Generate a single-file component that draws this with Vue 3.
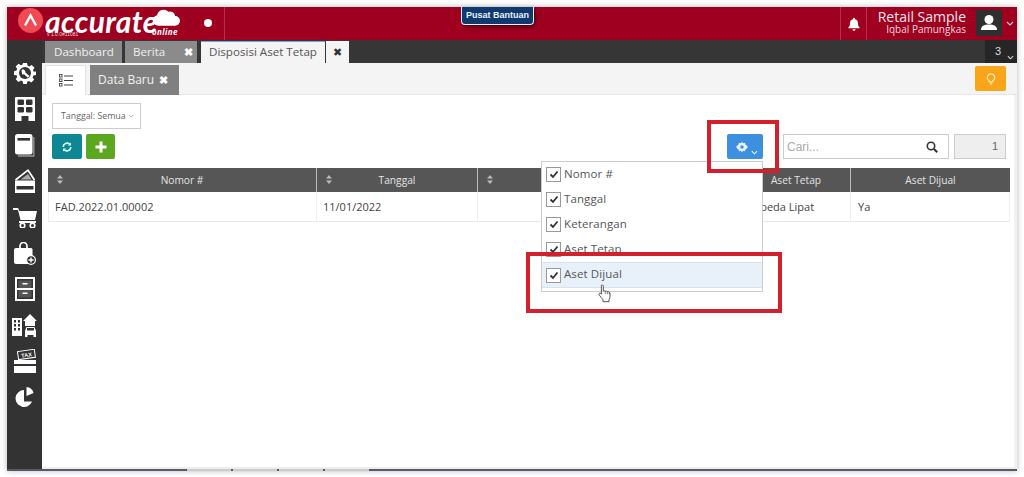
<script setup>
const columns = [
  { label: 'Nomor #', value: 'FAD.2022.01.00002', sort: true },
  { label: 'Tanggal', value: '11/01/2022', sort: true },
  { label: 'Keterangan', value: '', sort: true },
  { label: 'Aset Tetap', value: 'Sepeda Lipat', sort: false },
  { label: 'Aset Dijual', value: 'Ya', sort: false }
]
const options = ['Nomor #', 'Tanggal', 'Keterangan', 'Aset Tetap', 'Aset Dijual']
</script>

<template>
  <div class="window">
    <header class="topbar">
      <div class="brand">
        <svg class="mark" viewBox="0 0 25 25"><circle cx="12.500" cy="12.500" r="12.500" fill="#ee4b55"/><path d="M7 17.500 12.500 7.500l5.500 10" fill="none" stroke="#fff" stroke-width="2.400"/></svg>
        <span class="word">accurate</span>
        <svg class="cloud" viewBox="0 0 28 19"><path d="M5.500 19a5.500 5.500 0 0 1-1.300-10.800A7 7 0 0 1 16 4.500a5.500 5.500 0 0 1 7 4.500 5 5 0 0 1 0 10Z" fill="#fff"/></svg>
        <span class="online">online</span>
        <span class="version">v 1.0.0#11081</span>
      </div>
      <div class="dot-cell"><span class="dot"></span></div>
      <div class="spacer"></div>
      <div class="bell-cell">
        <svg viewBox="0 0 14 14" class="bell"><path d="M7 .8a1 1 0 0 1 1 1v.5c2.200.5 3 2.300 3 4.200 0 2 .6 3 1.600 4v.7H1.400v-.7c1-1 1.600-2 1.600-4 0-1.900.8-3.700 3-4.200v-.5a1 1 0 0 1 1-1ZM5.500 12.300h3a1.500 1.500 0 0 1-3 0Z" fill="#fff"/></svg>
      </div>
      <div class="user">
        <div class="org">Retail Sample</div>
        <div class="person">Iqbal Pamungkas</div>
      </div>
      <div class="avatar">
        <svg viewBox="0 0 20 20"><circle cx="10" cy="6.500" r="4.500" fill="#fff"/><path d="M2 17c0-4 3-5.500 8-5.500s8 1.500 8 5.500Z" fill="#fff"/></svg>
      </div>
      <svg class="user-caret" viewBox="0 0 8 5"><path d="m1 1 3 3 3-3" fill="none" stroke="#e8c8cf" stroke-width="1.200"/></svg>
    </header>

    <div class="body">
      <nav class="sidebar">
        <div class="slot">
          <svg width="22" height="22" viewBox="0 0 22 22"><path d="M9 1h4l.6 2.700 1.700.7 2.400-1.500 2.800 2.800-1.500 2.400.7 1.700L22 9.500v3.500l-2.700.6-.7 1.700 1.500 2.400-2.800 2.800-2.400-1.500-1.700.7L12.800 22H9.200l-.6-2.700-1.700-.7-2.400 1.500-2.800-2.800 1.500-2.400-.7-1.700L0 12.900V9.200l2.500-.6.700-1.700-1.500-2.400 2.800-2.800 2.400 1.500 1.700-.7Z" fill="#fff"/><circle cx="11" cy="11" r="6" fill="#333"/><path d="M7.500 8.500 8.800 7l2.400 1.800.2 1.700 4 3.500-1.500 1.700-3.900-3.400-1.800.1Z" fill="#fff"/></svg>
        </div>
        <div class="slot">
          <svg width="20" height="24" viewBox="0 0 20 24"><path d="M1 0h18a1 1 0 0 1 1 1v23h-6.500v-5h-7v5H0V1a1 1 0 0 1 1-1Z" fill="#fff"/><rect x="2.500" y="2.500" width="6.500" height="5.500" rx="1.200" fill="#333"/><rect x="11" y="2.500" width="6.500" height="5.500" rx="1.200" fill="#333"/><rect x="2.500" y="10" width="6.500" height="5.500" rx="1.200" fill="#333"/><rect x="11" y="10" width="6.500" height="5.500" rx="1.200" fill="#333"/></svg>
        </div>
        <div class="slot">
          <svg width="21" height="24" viewBox="0 0 21 24"><path d="M19.800 4v19H4" fill="none" stroke="#999" stroke-width="1.300"/><rect x="1" y="1" width="17.500" height="20.500" rx="2.500" fill="#fff"/><rect x="3.500" y="5" width="12.500" height="2.600" fill="#333"/></svg>
        </div>
        <div class="slot">
          <svg width="22" height="25" viewBox="0 0 22 25"><path d="M1.500 11 14 1.200 20.500 11" fill="none" stroke="#fff" stroke-width="1.700" stroke-linejoin="round"/><path d="M6.500 10.500 14 5l3.500 5.500Z" fill="#aaa"/><path d="M1 11.500h20v12.500H1Z" fill="#fff"/><rect x="2.500" y="17" width="17" height="3.500" fill="#333"/></svg>
        </div>
        <div class="slot">
          <svg width="24" height="21" viewBox="0 0 24 21"><path d="M0 1h5l1.500 3H24l-2 9H7.500L5 3H0Z" fill="#fff"/><rect x="6" y="14" width="17" height="2" fill="#fff"/><circle cx="9.500" cy="18.500" r="2.300" fill="#333" stroke="#fff" stroke-width="1.600"/><circle cx="19.500" cy="18.500" r="2.300" fill="#333" stroke="#fff" stroke-width="1.600"/></svg>
        </div>
        <div class="slot">
          <svg width="22" height="23" viewBox="0 0 22 23"><path d="M6 6V4a3.500 3.500 0 0 1 7 0v2" fill="none" stroke="#fff" stroke-width="1.700"/><path d="M2 6h15a1.500 1.500 0 0 1 1.500 1.500V17a4 4 0 0 0-3 5H2a2 2 0 0 1-2-2V8a2 2 0 0 1 2-2Z" fill="#fff"/><circle cx="17" cy="18" r="4.400" fill="#333" stroke="#fff" stroke-width="1.200"/><path d="M14.500 18h5M17 15.500v5" stroke="#fff" stroke-width="1.400"/></svg>
        </div>
        <div class="slot">
          <svg width="20" height="24" viewBox="0 0 20 24"><rect x="1" y="1" width="18" height="22" fill="none" stroke="#fff" stroke-width="2"/><rect x="3.500" y="3.500" width="13" height="7.500" fill="#555"/><rect x="3.500" y="13" width="13" height="7.500" fill="#555"/><rect x="7.500" y="6" width="5" height="1.500" fill="#fff"/><rect x="7.500" y="15.500" width="5" height="1.500" fill="#fff"/><rect x="2" y="11" width="16" height="2" fill="#fff"/></svg>
        </div>
        <div class="slot">
          <svg width="25" height="25" viewBox="0 0 25 25"><rect x="0" y="5" width="10" height="18" fill="#fff"/><g fill="#333"><rect x="2" y="7" width="2" height="2.500"/><rect x="6" y="7" width="2" height="2.500"/><rect x="2" y="11" width="2" height="2.500"/><rect x="6" y="11" width="2" height="2.500"/><rect x="2" y="15" width="2" height="2.500"/><rect x="6" y="15" width="2" height="2.500"/></g><path d="M11 8l7-7 7 7h-2v5H13V8Z" fill="#fff"/><path d="M13 18l1.500-4h8l1.500 4v6h-2.500v-2h-6v2H13Z" fill="#fff"/><rect x="15" y="15" width="7" height="2.500" fill="#333"/></svg>
        </div>
        <div class="slot">
          <svg width="24" height="24" viewBox="0 0 24 24"><rect x="1" y="11" width="22" height="4" fill="#fff"/><rect x="1" y="17" width="22" height="7" fill="#fff"/><g transform="rotate(-8 13 6)"><rect x="5" y="1.500" width="17" height="8" fill="#333" stroke="#fff" stroke-width="1"/><text x="13.500" y="8" class="tax">TAX</text></g></svg>
        </div>
        <div class="slot">
          <svg width="20" height="20" viewBox="0 0 20 20"><path d="M9 3a8.500 8.500 0 1 0 8 11.500H9Z" fill="#fff"/><path d="M11.500 0a8 8 0 0 1 7 6l-7 3Z" fill="#fff"/></svg>
        </div>
      </nav>

      <div class="main">
        <div class="tabbar">
          <div class="tab tab-home">Dashboard</div>
          <div class="tab tab-close">Berita <b>✖</b></div>
          <div class="tab tab-active">Disposisi Aset Tetap</div>
          <div class="tab tab-x">✖</div>
          <div class="spacer"></div>
          <div class="tab-count">3<svg viewBox="0 0 8 5"><path d="m1 1 3 3 3-3" fill="none" stroke="#ddd" stroke-width="1.200"/></svg></div>
        </div>

        <div class="subbar">
          <div class="subtab-list">
            <svg width="14" height="13" viewBox="0 0 14 13"><g fill="none" stroke="#555"><rect x=".5" y=".5" width="2.500" height="2.500"/><rect x=".5" y="5" width="2.500" height="2.500"/><rect x=".5" y="9.500" width="2.500" height="2.500"/></g><path d="M5 2h9M5 6.500h9M5 11h9" stroke="#444" stroke-width="1.100"/></svg>
          </div>
          <div class="subtab-new">Data Baru <b>✖</b></div>
          <div class="spacer"></div>
          <button class="bulb">
            <svg width="10" height="12" viewBox="0 0 12 14"><path d="M6 1a4.300 4.300 0 0 1 2.300 8l-.3 1.500H4L3.700 9A4.300 4.300 0 0 1 6 1Z" fill="none" stroke="#ffe9b0" stroke-width="1.500"/><path d="M4.500 12h3M5 13.300h2" stroke="#ffe9b0"/></svg>
          </button>
        </div>

        <div class="content">
          <div class="filter">Tanggal: Semua <svg viewBox="0 0 8 5"><path d="m1 1 3 3 3-3" fill="none" stroke="#999"/></svg></div>

          <div class="toolbar">
            <button class="btn teal">
              <svg width="10" height="10" viewBox="0 0 10 10"><path d="M1.200 5a3.800 3.800 0 0 1 6.300-2.800M8.800 5a3.800 3.800 0 0 1-6.300 2.800" fill="none" stroke="#dff" stroke-width="1.700"/><path d="M9 .5v3H6ZM1 9.500v-3h3Z" fill="#dff"/></svg>
            </button>
            <button class="btn green">
              <svg width="12" height="12" viewBox="0 0 12 12"><path d="M6 .5v11M.5 6h11" stroke="#fff" stroke-width="3"/></svg>
            </button>
            <div class="spacer"></div>
            <button class="btn blue">
              <svg width="12" height="12" viewBox="0 0 12 12"><path d="M6 .5 7 2.300l2-.5.600 2L11.500 5v2l-1.900 1.200-.6 2-2-.5-1 1.800-1-1.800-2 .5-.6-2L.5 7V5l1.900-1.200.6-2 2 .5Z" fill="#e8f2ff"/><circle cx="6" cy="6" r="1.700" fill="#3d8fdf"/></svg>
              <svg class="blue-caret" viewBox="0 0 8 5"><path d="m1 1 3 3 3-3" fill="none" stroke="#e8f2ff" stroke-width="1.200"/></svg>
            </button>
            <div class="search">
              <span>Cari...</span>
              <svg width="12" height="12" viewBox="0 0 12 12"><circle cx="5" cy="5" r="3.700" fill="none" stroke="#333" stroke-width="1.600"/><path d="m8 8 3.200 3.200" stroke="#333" stroke-width="2"/></svg>
            </div>
            <div class="page">1</div>
          </div>

          <div class="grid">
            <div v-for="col in columns" :key="col.label" class="th">
              <svg v-if="col.sort" class="sort" width="6" height="9" viewBox="0 0 6 9"><path d="M3 0 6 3.500H0ZM3 9 0 5.500h6Z" fill="#bbb"/></svg>
              {{ col.label }}
            </div>
            <div v-for="col in columns" :key="col.label + '-v'" class="td">{{ col.value }}</div>
          </div>
        </div>
      </div>
    </div>

    <div class="footer">
      <div class="foot-tabs"><i></i><i></i><i></i><i></i></div>
    </div>

    <div class="help">Pusat Bantuan</div>

    <div class="menu">
      <div v-for="opt in options" :key="opt" class="opt" :class="{ hover: opt === 'Aset Dijual' }">
        <span class="check">
          <svg width="10" height="9" viewBox="0 0 10 9"><path d="m1.500 4.500 2.500 2.500 4.500-5.500" fill="none" stroke="#333" stroke-width="1.800"/></svg>
        </span>
        <span class="opt-label">{{ opt }}</span>
      </div>
    </div>

    <div class="frame frame-gear"></div>
    <div class="frame frame-item"></div>

    <svg class="hand" width="15" height="19" viewBox="0 0 15 19"><path d="M4.500 1.200c.8-.6 1.800 0 1.800 1v5l.8-.3c.6-.2 1.200 0 1.400.3.700-.4 1.500-.2 1.700.4.700-.3 1.500 0 1.700.6.600 0 1.100.4 1.100 1.100v3.300c0 1.200-.4 2-1 2.800v2.300H6v-2c-1-1.200-2.500-3-4-5-.6-.9.500-2 1.500-1.300l.9.800V2.200c0-.4 0-.8.100-1Z" fill="#fff" stroke="#444" stroke-width=".9" stroke-linejoin="round"/><path d="M8.300 7.200v3M10.400 7.600v2.600M12.300 8.200v2" stroke="#444" stroke-width=".7"/></svg>
  </div>
</template>

<style>
html, body { margin: 0; background: #fff; overflow: hidden; }
</style>

<style scoped>
* { box-sizing: border-box; }
.window {
  position: relative;
  display: flex;
  flex-direction: column;
  width: 1010px;
  height: 464px;
  margin: 7px 7px 6px;
  background: #fff;
  box-shadow: 0 0 6px rgba(0, 0, 0, .28);
  font-family: "Open Sans", sans-serif;
  overflow: visible;
}
.spacer { flex: 1; }
.topbar {
  display: flex;
  align-items: stretch;
  height: 33px;
  background: #a00020;
  color: #fff;
  flex: none;
}
.brand { position: relative; width: 183px; flex: none; border-right: 1px solid #8b0a25; }
.mark { position: absolute; left: 11px; top: 1px; width: 25px; height: 25px; }
.word {
  position: absolute;
  left: 38px;
  top: 4px;
  font: italic 700 30px/20px Lato, sans-serif;
  letter-spacing: .4px;
}
.cloud { position: absolute; left: 146px; top: 0; width: 27px; height: 19px; }
.online { position: absolute; left: 145px; top: 20px; font: italic 700 8px/9px "Open Sans", sans-serif; letter-spacing: .4px; }
.version { position: absolute; left: 40px; top: 24px; font: 5px/6px "Liberation Sans", sans-serif; color: #f0d5da; }
.dot-cell { width: 35px; display: flex; align-items: center; justify-content: center; border-right: 1px solid #b5304a; flex: none; padding: 0 0 0 2px; }
.dot { width: 8px; height: 8px; border-radius: 50%; background: #fff; margin-top: -1px; }
.bell-cell { width: 27px; display: flex; align-items: center; justify-content: center; border-left: 1px solid #b5304a; border-right: 1px solid #b5304a; flex: none; }
.bell { width: 14px; height: 14px; }
.user { width: 99px; padding-top: 3px; text-align: right; flex: none; }
.org { font-size: 14px; line-height: 14px; color: #f5e8ea; }
.person { font-size: 10px; line-height: 11px; color: #eed6da; }
.avatar { width: 26px; height: 26px; margin: 3px 0 0 10px; background: #2f2f2f; display: flex; align-items: center; justify-content: center; flex: none; }
.avatar svg { width: 20px; height: 20px; }
.user-caret { width: 8px; height: 5px; margin: 14px 3px 0 4px; flex: none; }

.body { flex: 1; display: flex; min-height: 0; }
.sidebar { width: 35px; flex: none; background: #333; padding-top: 15px; }
.slot { height: 36px; display: flex; align-items: center; justify-content: center; }
.tax { font: 700 5.500px "Liberation Sans", sans-serif; fill: #fff; text-anchor: middle; }
.main { flex: 1; display: flex; flex-direction: column; min-width: 0; }
.tabbar { height: 23px; background: #363636; display: flex; padding: 1px 0 0 3px; flex: none; font-size: 11.600px; }
.tab { height: 22px; line-height: 21px; background: #8b8b8b; color: #efefef; padding: 0 9px; margin-right: 3px; white-space: nowrap; }
.tab-home { width: 77px; }
.tab b { margin-left: 16px; font-size: 11px; color: #fff; }
.tab-close { width: 72px; padding: 0 0 0 8px; margin-right: 4px; }
.tab-active { width: 124px; margin-right: 1px; background: #f4f4f4; color: #555; border-top: 1px solid #7aa3d6; padding: 0 8px; line-height: 20px; }
.tab-x { width: 23px; background: #f4f4f4; color: #333; text-align: center; padding: 0; font-size: 11px; margin: 0; }
.tab-count { width: 32px; margin-top: -1px; background: #262626; color: #ddd; font: 11px/23px "Liberation Sans", sans-serif; padding-left: 10px; position: relative; }
.tab-count svg { width: 7px; height: 5px; position: absolute; left: 22px; top: 15px; }
.subbar { height: 32px; background: #f4f4f4; border-bottom: 1px solid #e6e6e6; display: flex; padding: 2px 11px 0 3px; flex: none; }
.subtab-list { width: 41px; height: 30px; background: #fff; border: 1px solid #e2e2e2; border-bottom: 0; display: flex; align-items: center; justify-content: center; }
.subtab-new { width: 89px; height: 30px; margin-left: 4px; background: #808080; color: #f2f2f2; font-size: 12px; line-height: 30px; padding-left: 8px; white-space: nowrap; }
.subtab-new b { font-size: 11px; margin-left: 2px; color: #fff; }
.bulb { width: 31px; height: 25px; margin-top: 1px; border: 0; padding: 0; background: #f9a51a; border-radius: 2px; display: flex; align-items: center; justify-content: center; }
.content { flex: 1; padding: 8px 7px 0 6px; background: #fff; border-right: 3px solid #f1f1f1; border-bottom: 2px solid #eee; min-height: 0; }
.filter { width: 89px; height: 26px; margin-left: 4px; border: 1px solid #ccc; background: #fff; color: #666; font-size: 8.800px; line-height: 24px; padding-left: 8px; white-space: nowrap; }
.filter svg { width: 6px; height: 4px; vertical-align: 1px; }
.toolbar { display: flex; height: 25px; margin: 5px 0 9px; padding: 0 1px 0 4px; }
.btn { height: 25px; border: 0; padding: 0; border-radius: 2px; display: flex; align-items: center; justify-content: center; flex: none; position: relative; }
.teal { width: 30px; background: #0e8794; }
.green { width: 29px; margin-left: 4px; background: #5ba71f; }
.blue { width: 36px; background: #3d8fdf; margin-right: 20px; padding-right: 6px; }
.blue-caret { width: 7px; height: 5px; position: absolute; right: 5px; bottom: 4px; }
.search { width: 166px; height: 25px; border: 1px solid #ccc; display: flex; align-items: center; justify-content: space-between; padding: 0 10px 0 3px; color: #aaa; font: 12px "Liberation Sans", sans-serif; flex: none; }
.page { width: 52px; height: 25px; margin-left: 5px; border: 1px solid #ccc; background: #eee; color: #666; font: 11px/23px "Liberation Sans", sans-serif; text-align: right; padding-right: 7px; flex: none; }
.grid { display: grid; grid-template-columns: 268px 161px 264px 109px 160px; width: 962px; }
.th { position: relative; height: 24px; background: #565656; color: #e4e4e4; font-size: 10.200px; line-height: 24px; text-align: center; border-left: 1px solid #bbb; }
.th:first-child { border-left: 0; }
.sort { position: absolute; left: 9px; top: 7px; }
.td { height: 30px; padding-left: 6px; color: #444; font-size: 11px; line-height: 29px; border-left: 1px solid #eee; border-bottom: 1px solid #e8e8e8; white-space: nowrap; overflow: hidden; }
.td:last-child { border-right: 1px solid #eee; padding-left: 7px; }
.footer { height: 2px; background: #555a66; position: relative; flex: none; }
.foot-tabs { position: absolute; left: 180px; top: 0; display: flex; gap: 2px; }
.foot-tabs i { width: 44px; height: 2px; background: #ccc; }
.help {
  position: absolute;
  left: 454px;
  top: 0;
  width: 73px;
  height: 18px;
  background: #0f3a6e;
  border: 1px solid #e8eef5;
  border-top: 0;
  border-radius: 0 0 4px 4px;
  box-shadow: 2px 2px 4px rgba(0, 0, 0, .5);
  color: #e8f0f8;
  font: 700 9px/16px "Liberation Sans", sans-serif;
  text-align: center;
}
.menu {
  position: absolute;
  left: 534px;
  top: 154px;
  width: 222px;
  height: 131px;
  background: #fff;
  border: 1px solid #ccc;
}
.opt { display: flex; align-items: center; gap: 3px; height: 25.100px; padding-left: 4px; font-size: 11.500px; color: #555; letter-spacing: .1px; }
.opt.hover { height: 26px; background: #e8f1fa; border-top: 1px solid #d5e2ef; border-bottom: 1px solid #d5e2ef; }
.opt-label { margin-bottom: 3px; }
.check { width: 15px; height: 15px; border: 1px solid #999; background: #fff; display: flex; align-items: center; justify-content: center; flex: none; }
.frame { position: absolute; border: 4px solid #d2202c; }
.frame-gear { left: 700px; top: 113px; width: 72px; height: 53px; }
.frame-item { left: 519px; top: 245px; width: 256px; height: 61px; }
.hand { position: absolute; left: 590px; top: 277px; }
</style>
